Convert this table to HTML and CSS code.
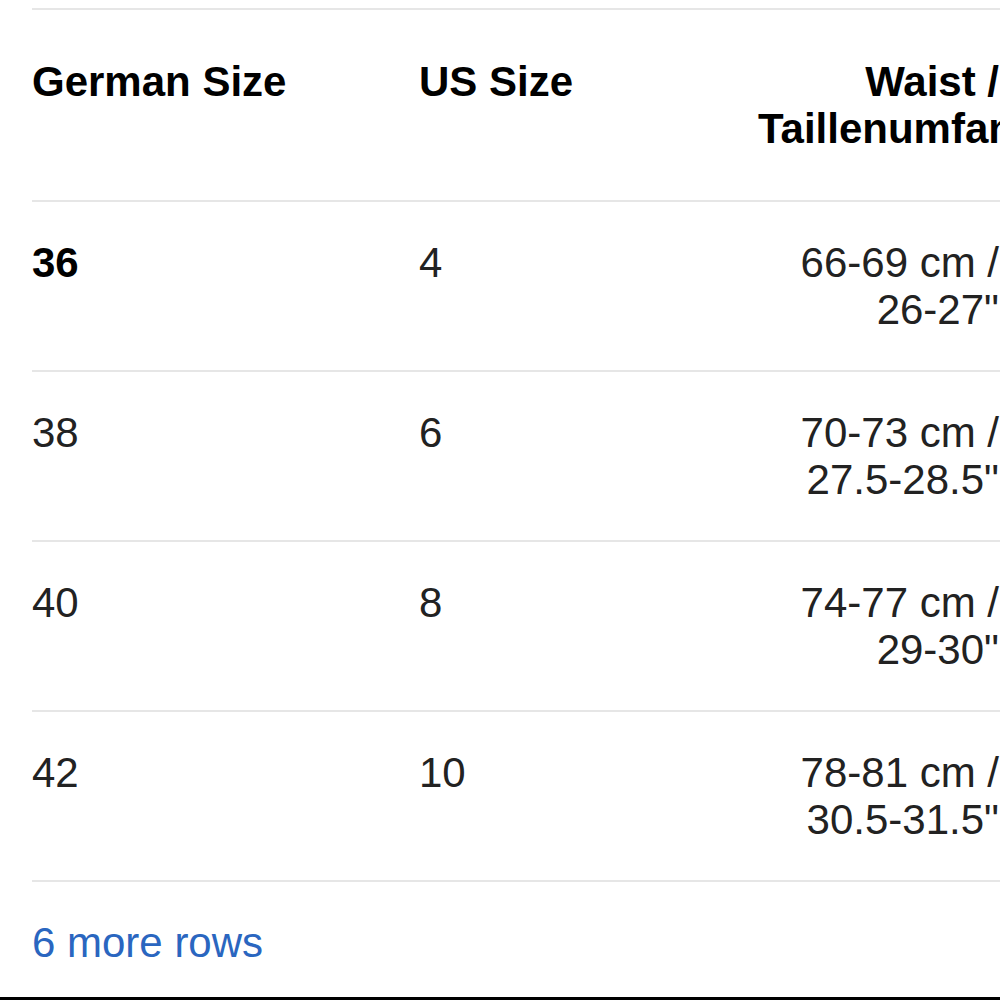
FILE: index.html
```html
<!DOCTYPE html>
<html>
<head>
<meta charset="utf-8">
<link rel="stylesheet" href="styles.css">
</head>
<body>
<div class="wrap">
  <table class="sizes">
    <colgroup>
      <col class="c1"><col class="c2"><col class="c3"><col class="c4">
    </colgroup>
    <thead>
      <tr>
        <th class="left">German Size</th>
        <th class="left">US Size</th>
        <th class="right">Waist / Taillenumfang</th>
        <th></th>
      </tr>
    </thead>
    <tbody>
      <tr><td class="left strong">36</td><td class="left">4</td><td class="right">66-69 cm / 26-27"</td><td></td></tr>
      <tr><td class="left">38</td><td class="left">6</td><td class="right">70-73 cm / 27.5-28.5"</td><td></td></tr>
      <tr><td class="left">40</td><td class="left">8</td><td class="right">74-77 cm / 29-30"</td><td></td></tr>
      <tr><td class="left">42</td><td class="left">10</td><td class="right">78-81 cm / 30.5-31.5"</td><td></td></tr>
    </tbody>
  </table>
  <div class="more">6 more rows</div>
</div>
<div class="edge"></div>
</body>
</html>
```
FILE: styles.css
```css
html, body {
  margin: 0;
  padding: 0;
  background: #fff;
  overflow: hidden;
  width: 1000px;
  height: 1000px;
}
body {
  font-family: "Liberation Sans", Arial, sans-serif;
  font-size: 42px;
  line-height: 47px;
  color: #222;
}
.wrap {
  padding: 8px 0 0 32px;
  width: 1300px;
}
.sizes {
  border-collapse: collapse;
  table-layout: fixed;
  width: 1272px;
  border-top: 2px solid #e6e6e6;
}
.c1 { width: 387px; }
.c2 { width: 339px; }
.c3 { width: 241px; }
.c4 { width: 305px; }
th, td {
  padding: 0;
  vertical-align: top;
  border-bottom: 2px solid #e6e6e6;
}
th {
  font-weight: bold;
  color: #000;
  padding-top: 48px;
  padding-bottom: 48px;
}
td {
  padding-top: 37px;
  padding-bottom: 37px;
}
.left { text-align: left; }
.right { text-align: right; }
.strong { font-weight: bold; color: #000; }
.more {
  color: #2a66c0;
  padding-top: 37px;
  height: 78px;
}
.edge {
  height: 3px;
  background: #000;
  width: 1000px;
}
```
